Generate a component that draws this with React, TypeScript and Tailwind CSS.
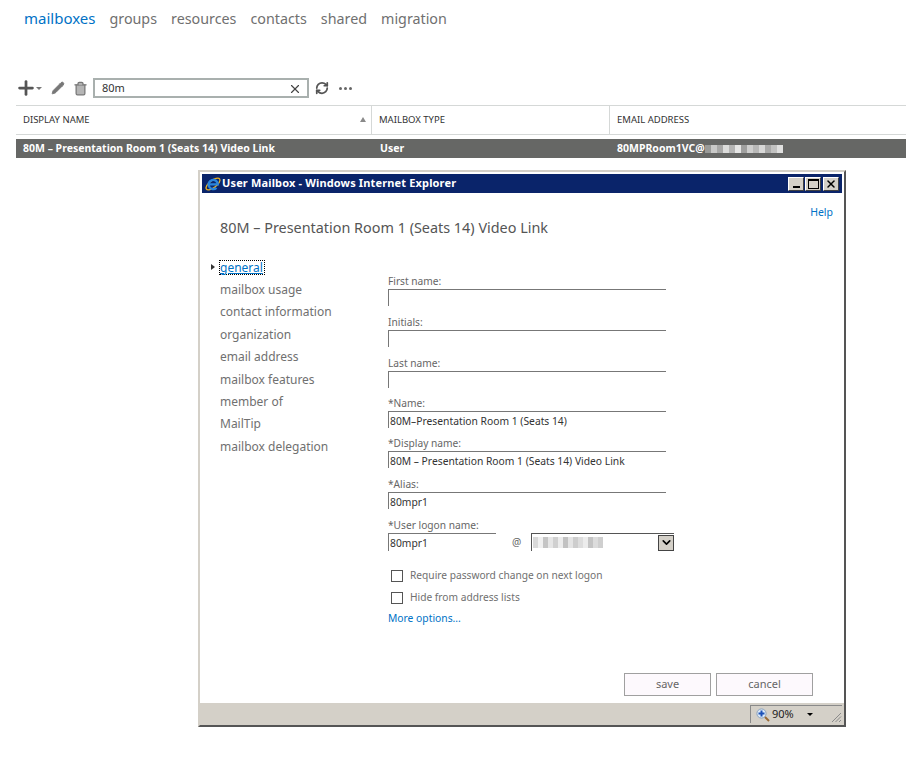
import { Plus, Pencil, Trash2, X, RefreshCw, ChevronDown } from 'lucide-react'

const FONT = "font-['Open_Sans','Noto_Sans',sans-serif]"

const TABS = ['groups', 'resources', 'contacts', 'shared', 'migration']
const NAV = ['mailbox usage', 'contact information', 'organization', 'email address', 'mailbox features', 'member of', 'MailTip', 'mailbox delegation']

const FIELDS = [
  { label: 'First name:', value: '', top: 'mt-0' },
  { label: 'Initials:', value: '', top: 'mt-[9px]' },
  { label: 'Last name:', value: '', top: 'mt-[9px]' },
  { label: '*Name:', value: '80M–Presentation Room 1 (Seats 14)', top: 'mt-[8px]' },
  { label: '*Display name:', value: '80M – Presentation Room 1 (Seats 14) Video Link', top: 'mt-[8px]' },
  { label: '*Alias:', value: '80mpr1', top: 'mt-[9px]' },
]

const BLUR_A = ['bg-[#d9d9d9]', 'bg-[#f0f0f0]', 'bg-[#c5c5c5]', 'bg-[#e6e6e6]', 'bg-[#d0d0d0]', 'bg-[#ececec]', 'bg-[#c2c2c2]', 'bg-[#e4e4e4]', 'bg-[#cdcdcd]', 'bg-[#dddddd]', 'bg-[#ececec]', 'bg-[#c4c4c4]', 'bg-[#dcdcdc]', 'bg-[#cfcfcf]']
const BLUR_B = ['bg-[#9a9b99]', 'bg-[#c9c9c8]', 'bg-[#a8a8a7]', 'bg-[#dcdcdb]', 'bg-[#b5b5b4]', 'bg-[#e6e6e5]', 'bg-[#a0a09f]', 'bg-[#cfcfce]', 'bg-[#b8b8b7]', 'bg-[#d8d8d7]', 'bg-[#aaaaa9]', 'bg-[#c2c2c1]', 'bg-[#e0e0df]']

function Blur({ cells, cell }: { cells: string[]; cell: string }) {
  return (
    <span className="flex">
      {cells.map((c, i) => (
        <span key={i} className={`${cell} ${c}`} />
      ))}
    </span>
  )
}

function Field({ label, value, top }: { label: string; value: string; top: string }) {
  return (
    <div className={top}>
      <div className="h-[15px] text-[10.2px] leading-[14px] text-[#666666]">{label}</div>
      <div className="h-[17px] w-[278px] border-t border-l border-[#777777] pl-[1px] text-[10.3px] leading-[18px] text-[#333333]">
        {value}
      </div>
    </div>
  )
}

function IeLogo() {
  return (
    <svg viewBox="0 0 18 18" className="h-[18px] w-[18px]">
      <ellipse cx="9" cy="9" rx="8.4" ry="3.6" transform="rotate(-38 9 9)" fill="none" stroke="#e8b020" strokeWidth="1.3" />
      <path d="M5.2 9.4h8.6a4.6 4.6 0 1 0-1.4 3.4" fill="none" stroke="#2a86dc" strokeWidth="2.4" />
    </svg>
  )
}

function CaptionButton({ children, className }: { children: React.ReactNode; className: string }) {
  return (
    <span className={`flex h-[14px] w-[16px] bg-[#d4d0c8] border-t border-l border-white border-r border-b border-r-[#404040] border-b-[#404040] ${className}`}>
      {children}
    </span>
  )
}

export default function App() {
  return (
    <div className={`relative h-[757px] w-[906px] overflow-hidden bg-white ${FONT}`}>
      {/* Tabs */}
      <div className="flex gap-[14px] pl-[24px] pt-[7px] text-[14.3px] leading-[23px] text-[#707070]">
        <span className="text-[15px] text-[#0072c6]">mailboxes</span>
        {TABS.map(t => <span key={t}>{t}</span>)}
      </div>

      {/* Toolbar */}
      <div className="mt-[47px] flex h-[22px] items-center pl-[15px] text-[#555555]">
        <Plus size={22} strokeWidth={3} className="text-[#555555]" />
        <span className="-ml-[1px] h-0 w-0 border-x-[3px] border-t-[3px] border-x-transparent border-t-[#777777]" />
        <Pencil size={14} fill="#777777" strokeWidth={1.5} className="ml-[9px] text-[#777777]" />
        <Trash2 size={15} fill="#b5b5b5" strokeWidth={2} className="ml-[8px] text-[#777777]" />
        <div className="ml-[5px] flex h-[20px] w-[216px] items-center justify-between border-2 border-[#a9b0ae] pl-[7px] pr-[5px] text-[11px] text-[#333333]">
          80m
          <X size={14} strokeWidth={2} className="mt-[2px] text-[#444444]" />
        </div>
        <RefreshCw size={14} strokeWidth={3} className="ml-[6px]" />
        <span className="ml-[10px] flex gap-[2px]">
          <span className="h-[3px] w-[3px] rounded-full bg-[#666666]" />
          <span className="h-[3px] w-[3px] rounded-full bg-[#666666]" />
          <span className="h-[3px] w-[3px] rounded-full bg-[#666666]" />
        </span>
      </div>

      {/* Mailbox table */}
      <div className="ml-[16px] mt-[6px] flex h-[30px] border-y border-[#d5d8d7] text-[9.5px] leading-[27px] text-[#333333]">
        <div className="flex w-[356px] items-center justify-between border-r border-[#d5d8d7] pb-[2px] pl-[7px] pr-[5px]">
          DISPLAY NAME
          <span className="h-0 w-0 border-x-[3.5px] border-b-[5px] border-x-transparent border-b-[#8a8a8a]" />
        </div>
        <div className="w-[238px] border-r border-[#d5d8d7] pl-[7px]">MAILBOX TYPE</div>
        <div className="pl-[7px]">EMAIL ADDRESS</div>
      </div>
      <div className="ml-[16px] mt-[4px] flex h-[19px] bg-[#666765] text-[10.5px] font-bold leading-[19px] text-white">
        <div className="w-[356px] pl-[7px]">80M – Presentation Room 1 (Seats 14) Video Link</div>
        <div className="w-[238px] pl-[8px]">User</div>
        <div className="flex items-center pl-[7px]">
          80MPRoom1VC@
          <Blur cells={BLUR_B} cell="h-[8px] w-[6px]" />
        </div>
      </div>

      {/* IE popup window */}
      <div className="absolute left-[198px] top-[170px] flex h-[557px] w-[648px] flex-col border-[2px] border-[#d4d0c8] border-r-[#555555] border-b-[#555555] p-[2px] pb-0">
        <div className="flex h-[19px] shrink-0 items-center bg-[#0a246a] pl-[2px] pr-[3px] font-['Liberation_Sans',sans-serif] text-[11px] font-bold tracking-[0.15px] text-white">
          <IeLogo />
          <span>User Mailbox - Windows Internet Explorer</span>
          <div className="ml-auto flex items-center">
            <CaptionButton className="items-end justify-center pb-[2px]">
              <span className="h-[2px] w-[7px] bg-black" />
            </CaptionButton>
            <CaptionButton className="ml-[1px] items-center justify-center">
              <span className="h-[10px] w-[11px] border border-t-2 border-black" />
            </CaptionButton>
            <CaptionButton className="ml-[2px] items-center justify-center">
              <X size={12} strokeWidth={3} className="text-black" />
            </CaptionButton>
          </div>
        </div>

        <div className="flex min-h-0 flex-1 flex-col bg-white">
          <div className="flex justify-end pr-[9px] pt-[12px] text-[10.5px] leading-[15px] text-[#0072c6]">Help</div>
          <div className="pl-[18px] text-[14.4px] leading-[15px] text-[#555555]">
            80M – Presentation Room 1 (Seats 14) Video Link
          </div>

          <div className="mt-[21px] flex">
            {/* Left nav */}
            <div className="w-[186px] shrink-0 pl-[9px] text-[12px] text-[#707070]">
              <div className="flex h-[23px] items-center pb-[1px]">
                <span className="mr-[4px] h-0 w-0 border-y-[3px] border-l-[4px] border-y-transparent border-l-[#333333]" />
                <span className="h-[15px] border border-dotted border-black pr-[1px] leading-[13px] text-[#0072c6] underline">general</span>
              </div>
              {NAV.map(n => (
                <div key={n} className="h-[22.4px] pl-[9px] leading-[22.4px]">{n}</div>
              ))}
            </div>

            {/* Form */}
            <div className="pt-[18px]">
              {FIELDS.map(f => <Field key={f.label} {...f} />)}

              <div className="mt-[9px]">
                <div className="h-[15px] text-[10.2px] leading-[14px] text-[#666666]">*User logon name:</div>
                <div className="flex">
                  <div className="h-[18px] w-[108px] border-t border-l border-[#777777] pl-[1px] text-[10.3px] leading-[19px] text-[#333333]">80mpr1</div>
                  <span className="ml-[16px] text-[10.3px] leading-[18px] text-[#666666]">@</span>
                  <div className="ml-[10px] flex h-[18px] w-[143px] items-center justify-between border-t border-l border-[#555555] bg-white pl-[1px]">
                    <Blur cells={BLUR_A} cell="h-[11px] w-[5px]" />
                    <span className="flex h-[16px] w-[16px] items-center justify-center border border-[#444444] bg-[#d4d0c8]">
                      <ChevronDown size={13} strokeWidth={3} className="text-black" />
                    </span>
                  </div>
                </div>
              </div>

              <label className="ml-[3px] mt-[14px] flex h-[22px] items-center text-[10.2px] text-[#707070]">
                <span className="mr-[7px] h-[12px] w-[12px] border border-[#555555]" />
                Require password change on next logon
              </label>
              <label className="ml-[3px] flex h-[22px] items-center text-[10.2px] text-[#707070]">
                <span className="mr-[7px] h-[12px] w-[12px] border border-[#555555]" />
                Hide from address lists
              </label>
              <div className="mt-[1px] text-[10.3px] leading-[16px] text-[#0072c6]">More options...</div>
            </div>
          </div>

          {/* Footer buttons */}
          <div className="mb-[7px] mt-auto flex justify-end gap-[5px] pr-[29px] text-[11px] text-[#666666]">
            <button className="h-[23px] w-[87px] border border-[#a0a0a0] bg-[#fdf9fd]">save</button>
            <button className="h-[23px] w-[97px] border border-[#a0a0a0] bg-[#fdf9fd]">cancel</button>
          </div>
        </div>

        {/* Status bar */}
        <div className="-mx-[2px] flex h-[22px] shrink-0 justify-end bg-[#d4d0c8] pr-[2px] pt-[2px] font-['Liberation_Sans',sans-serif]">
          <div className="flex h-[18px] w-[92px] items-center border-l border-t border-[#8a8a8a] pl-[5px] text-[11px] text-[#222222]">
            <svg viewBox="0 0 14 14" className="h-[14px] w-[14px]">
              <circle cx="5.5" cy="5.5" r="4.6" fill="#dbe9f8" stroke="#8aa2bd" />
              <path d="M5.5 2.5v6M2.5 5.5h6" stroke="#1d52b8" strokeWidth="2" />
              <path d="M9 9l4 4" stroke="#9a6a35" strokeWidth="2" />
            </svg>
            <span className="ml-[2px]">90%</span>
            <span className="ml-[13px] h-0 w-0 border-x-[3px] border-t-[3px] border-x-transparent border-t-black" />
            <svg viewBox="0 0 12 12" className="ml-auto mt-[5px] h-[12px] w-[12px]">
              <path d="M11 2L2 11M11 5.5L5.5 11M11 9L9 11" stroke="#8a8a8a" strokeWidth="1" />
            </svg>
          </div>
        </div>
      </div>
    </div>
  )
}
